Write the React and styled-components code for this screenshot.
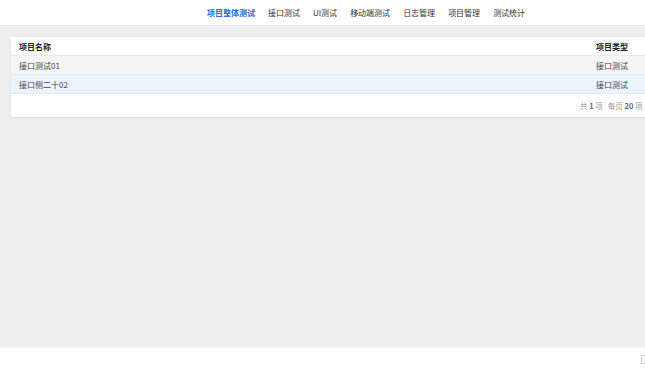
import React from 'react';
import styled, { createGlobalStyle } from 'styled-components';

const Global = createGlobalStyle`
  html, body { margin: 0; padding: 0; }
  body {
    font-family: "Microsoft YaHei", "Noto Sans CJK SC", "Liberation Sans", sans-serif;
    background: #eeeeee;
    overflow: hidden;
  }
`;

const Page = styled.div`
  display: flex;
  flex-direction: column;
  width: 645px;
  height: 368px;
  overflow: hidden;
`;

const Header = styled.header`
  height: 25px;
  background: #fff;
  display: flex;
  align-items: center;
  padding-left: 207px;
  gap: 13px;
  flex-shrink: 0;
`;

const NavItem = styled.span`
  font-size: 8px;
  line-height: 1;
  color: ${p => (p.active ? '#1a6ede' : '#333')};
  font-weight: ${p => (p.active ? 600 : 400)};
  white-space: nowrap;
`;

const Main = styled.main`
  flex: 1;
  background: #eeeeee;
  padding: 12px 0 0 11px;
`;

const Card = styled.div`
  width: 650px;
  background: #fff;
  border-radius: 2px;
  box-shadow: 0 1px 2px rgba(0, 0, 0, 0.08);
`;

const Row = styled.div`
  display: grid;
  grid-template-columns: 577px 1fr;
  height: 19px;
  box-sizing: border-box;
  align-items: center;
  padding-left: 8px;
  font-size: 8px;
  color: ${p => (p.head ? '#222' : '#444')};
  font-weight: ${p => (p.head ? 600 : 400)};
  background: ${p => p.bg || '#fff'};
  border-bottom: 1px solid #e6e9ee;
`;

const Cell = styled.span`
  white-space: nowrap;
`;

const Footer = styled.div`
  height: 23px;
  display: flex;
  align-items: center;
  padding-left: 569px;
  font-size: 7.5px;
  color: #999;
  gap: 5px;
  white-space: nowrap;
`;

const Strong = styled.b`
  color: #666;
  font-weight: 600;
`;

const Bottom = styled.footer`
  height: 20px;
  background: #fff;
  border-top: 1px solid #f4f4f4;
  flex-shrink: 0;
  display: flex;
  justify-content: flex-end;
  align-items: center;
`;

const Corner = styled.span`
  width: 3px;
  height: 7px;
  border: 1px solid #ccc;
  border-right: none;
  margin-top: 2px;
`;

const nav = ['项目整体测试', '接口测试', 'UI测试', '移动端测试', '日志管理', '项目管理', '测试统计'];

const rows = [
  { name: '接口测试01', type: '接口测试', bg: '#f5f5f5' },
  { name: '接口侧二十02', type: '接口测试', bg: '#ebf3fd' }
];

export default function App() {
  return (
    <Page>
      <Global />
      <Header>
        {nav.map((n, i) => (
          <NavItem key={n} active={i === 0}>{n}</NavItem>
        ))}
      </Header>
      <Main>
        <Card>
          <Row head>
            <Cell>项目名称</Cell>
            <Cell>项目类型</Cell>
          </Row>
          {rows.map(r => (
            <Row key={r.name} bg={r.bg}>
              <Cell>{r.name}</Cell>
              <Cell>{r.type}</Cell>
            </Row>
          ))}
          <Footer>
            <span>共 <Strong>1</Strong> 项</span>
            <span>每页 <Strong>20</Strong> 项</span>
          </Footer>
        </Card>
      </Main>
      <Bottom>
        <Corner />
      </Bottom>
    </Page>
  );
}
